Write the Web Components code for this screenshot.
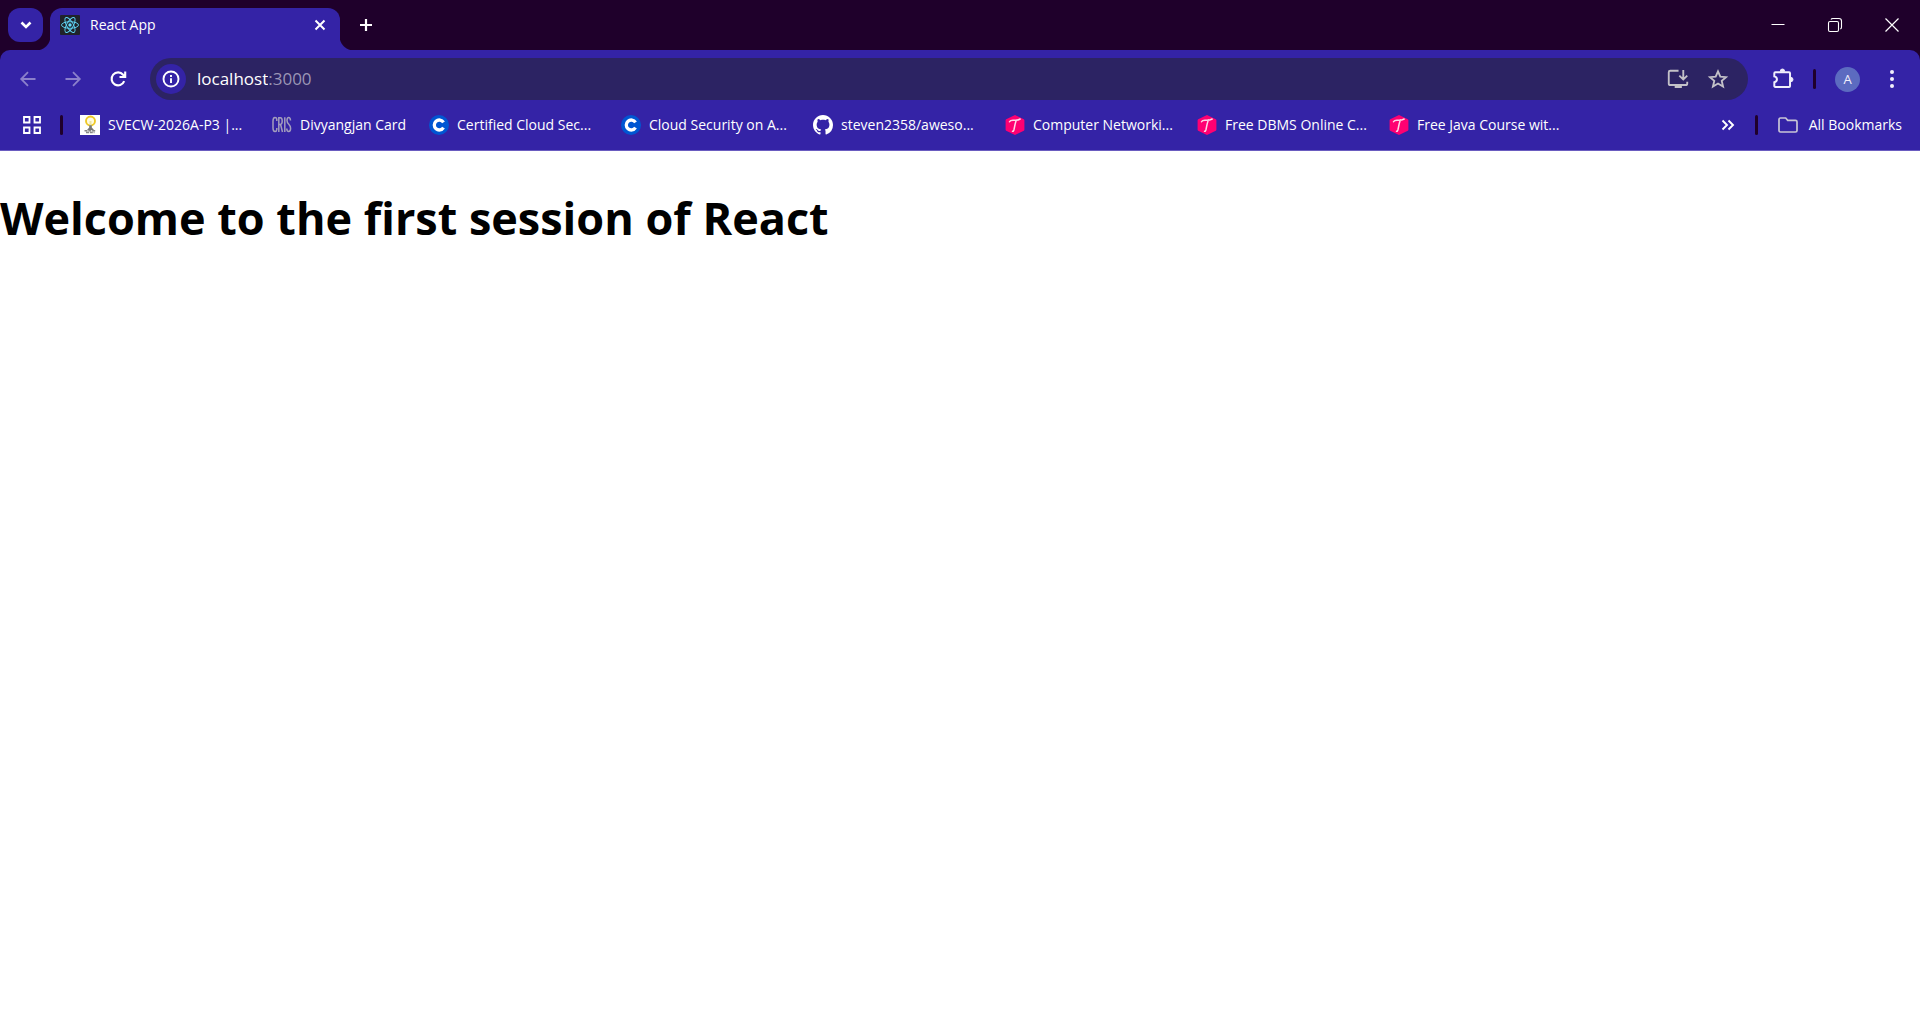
<!DOCTYPE html>
<html lang="en">
<head>
<meta charset="utf-8">
<title>React App</title>
<style>
:root{--frame:#1f002b;--bar:#3423a6;--field:#2c2363;font-family:"Open Sans","Noto Sans",sans-serif}
body{margin:0;background:#fff;color:#000}
</style>
</head>
<body>
<browser-window>
  <tab-strip slot="chrome"><browser-tab>React App</browser-tab></tab-strip>
  <nav-bar slot="chrome" host="localhost" port=":3000"></nav-bar>
  <bookmarks-bar slot="chrome">
    <book-mark icon="bulb">SVECW-2026A-P3 |...</book-mark>
    <book-mark icon="cris" short>Divyangjan Card</book-mark>
    <book-mark icon="coursera">Certified Cloud Sec...</book-mark>
    <book-mark icon="coursera">Cloud Security on A...</book-mark>
    <book-mark icon="github">steven2358/aweso...</book-mark>
    <book-mark icon="hex">Computer Networki...</book-mark>
    <book-mark icon="hex">Free DBMS Online C...</book-mark>
    <book-mark icon="hex">Free Java Course wit...</book-mark>
  </bookmarks-bar>
  <welcome-page>Welcome to the first session of React</welcome-page>
</browser-window>
<script>
const ICONS = {
  down: '<path d="m5.500 7.500 4.500 4.500 4.500-4.500" stroke-width="2.600"/>',
  close: '<path d="m5.500 5.500 9 9m0-9-9 9" stroke-width="2"/>',
  plus: '<path d="M10 4v12M4 10h12" stroke-width="2.200"/>',
  back: '<path d="M17.500 10H3.500M10 3.200 3.200 10l6.800 6.800" stroke-width="1.800"/>',
  forward: '<path d="M2.500 10h14M10 3.200l6.800 6.800-6.800 6.800" stroke-width="1.800"/>',
  reload: '<path d="M16.200 12.200A6.500 6.500 0 1 1 15.100 5.700L17 7.800M17.200 2.600V8H11.500" stroke-width="2.100"/>',
  info: '<circle cx="10" cy="10" r="7.500" stroke-width="1.900"/><path d="M10 9.300V14M10 6v2" stroke-width="1.900"/>',
  install: '<path d="M10.500 2.500H3Q1.600 2.500 1.600 3.900V14q0 1.500 1.500 1.500h13.800q1.500 0 1.500-1.500v-1.500M14.800 1.800v8.500M11.200 6.900l3.600 3.600 3.600-3.600" stroke-width="1.700"/><path d="M7 15h6.500v3.200H7z" fill="currentColor" stroke="none"/>',
  star: '<path d="m10 3 2.100 4.800 5.200.5-3.900 3.400 1.200 5.100L10 14.100l-4.600 2.700 1.200-5.100L2.700 8.300l5.200-.5z" stroke-width="1.700"/>',
  puzzle: '<path d="M3 3.800H15.500Q16.400 3.800 16.400 4.700V16.300q0 .9-.9.900H3q-.9 0-.9-.9V13q2.400-.5 2.400-2.700T2.100 7.600V4.700Q2.100 3.800 3 3.800z" stroke-width="1.800"/><path d="M7.500 3a2 2.100 0 0 1 4 0zM17 8.500a2.100 2 0 0 1 0 4z" fill="currentColor" stroke-width=".8"/>',
  dots: '<g fill="currentColor" stroke="none"><circle cx="10" cy="3" r="2"/><circle cx="10" cy="10" r="2"/><circle cx="10" cy="17" r="2"/></g>',
  minimize: '<path d="M3.500 9.500h13" stroke-width="1"/>',
  restore: '<rect x="3.500" y="6.500" width="10" height="10" rx="1.500" stroke-width="1.100"/><path d="M6 4.500Q6.400 3.500 8 3.500h6q2.500 0 2.500 2.500v6q0 1.600-1.200 2" stroke-width="1.100"/>',
  exit: '<path d="m3.500 3.500 13 13m0-13-13 13" stroke-width="1.200"/>',
  grid: '<path d="M2 2h5.500v5.500H2zM12.500 2H18v5.500h-5.500zM2 12.500h5.500V18H2zM12.500 12.500H18V18h-5.500z" stroke-width="1.800"/>',
  more: '<path d="m4.500 5.500 4.500 4.500-4.500 4.500M10.500 5.500 15 10l-4.500 4.500" stroke-width="1.900"/>',
  folder: '<path d="M1 4.500Q1 3 2.500 3h5.200l2 2.300h7.800q1.500 0 1.500 1.500v8.700q0 1.500-1.500 1.500h-15Q1 17 1 15.500z" stroke-width="1.700"/>',
  react: '<rect width="20" height="20" rx="1" fill="#20232a" stroke="none"/><g stroke="#61dafb" stroke-width=".9"><ellipse cx="10" cy="10" rx="8.500" ry="3.300"/><ellipse cx="10" cy="10" rx="8.500" ry="3.300" transform="rotate(60 10 10)"/><ellipse cx="10" cy="10" rx="8.500" ry="3.300" transform="rotate(120 10 10)"/></g><circle cx="10" cy="10" r="1.700" fill="#61dafb" stroke="none"/>',
  bulb: '<path fill="#fff" stroke="none" d="M0 0h20v20H0z"/><circle cx="10.500" cy="6" r="4.500" fill="#fffbe0" stroke="#efc928" stroke-width="1.900"/><path d="M10.500 6v5" stroke="#ece4a2" stroke-width="2"/><path d="M9.200 10.200h2.600v2.300l2.200 2.500H7l2.200-2.500z" fill="#777" stroke="none"/><path d="M4.500 15.700h11.500M6 17.500h8.500" stroke="#888" stroke-width="1.600" stroke-dasharray="3 .8"/>',
  cris: '<g stroke="#a39dbd" stroke-width="1.500"><path d="M4.800 6V4.200Q4.500 2.500 3 2.500 1 2.500 1 6v7q0 3.500 2 3.500 1.600 0 1.800-2V13M6.800 17V2.700h1.600q1.800 0 1.800 3.300T8.400 9.500H7M8.600 9.500l1.900 7.500M12.800 2.200V17M18.500 5.500q-.2-3-1.800-3t-1.700 3q0 2 1.800 3.800t1.800 4q0 3.200-1.900 3.200t-1.900-3"/></g>',
  coursera: '<circle cx="10" cy="10" r="10" fill="#0056d2" stroke="none"/><path d="M14.500 7.300A5 5 0 1 0 14.500 12.700" stroke="#fff" stroke-width="3.300"/>',
  github: '<path fill="#fff" stroke="none" transform="scale(1.25)" d="M8 0C3.580 0 0 3.580 0 8c0 3.540 2.290 6.530 5.470 7.590.4.070.55-.17.55-.38v-1.490c-2.010.37-2.530-.49-2.690-.94-.09-.23-.48-.94-.82-1.130-.28-.15-.68-.52-.01-.53.63-.01 1.080.58 1.230.82.72 1.210 1.870.87 2.330.66.070-.52.28-.87.51-1.070-1.780-.2-3.640-.89-3.640-3.950 0-.87.31-1.590.82-2.150-.08-.2-.36-1.020.08-2.120 0 0 .67-.21 2.200.82.64-.18 1.320-.27 2-.27s1.360.09 2 .27c1.530-1.040 2.200-.82 2.200-.82.44 1.100.16 1.920.08 2.120.51.56.82 1.270.82 2.150 0 3.070-1.870 3.750-3.650 3.950.29.25.54.73.54 1.480v2.200c0 .21.15.46.55.38A8 8 0 0 0 16 8c0-4.420-3.580-8-8-8z"/>',
  hex: '<path d="m10 1.200 8.300 4v9.600l-8.300 4-8.300-4V5.200z" fill="#ff0072" stroke="#ff0072" stroke-width="2.200" stroke-linejoin="round"/><path d="M4.500 6.800q.7-1.500 3.500-1.600 4.200.5 7.200-1.200M11.300 5q-1.300 3.800-2.300 9.500-.5 2-1.500 1.700" stroke="#ffd5e8" stroke-width="1.500" stroke-linecap="round"/>'
};

const define = (name, css, html) => customElements.define(name, class extends HTMLElement {
  constructor() {
    super();
    this.attachShadow({mode: 'open'});
  }
  connectedCallback() {
    const markup = typeof html === 'function' ? html(this) : html;
    this.shadowRoot.innerHTML = `<style>:host,*{box-sizing:border-box}button{font:inherit;color:inherit;background:none;border:0;padding:0;margin:0;display:flex;align-items:center;justify-content:center;flex:none}${css}</style>${markup}`;
  }
});

define('ui-icon', ':host{display:block;flex:none;width:20px;height:20px}svg{display:block;width:100%;height:100%}',
  el => `<svg viewBox="0 0 20 20" fill="none" stroke="currentColor" aria-hidden="true">${ICONS[el.getAttribute('name')]}</svg>`);

define('bar-divider', ':host{display:block;flex:none;width:3px;height:20px;border-radius:2px;background:var(--frame)}', '');

define('browser-window', ':host{display:flex;flex-direction:column;min-height:100vh}header{background:var(--frame);color:#fff}',
  '<header><slot name="chrome"></slot></header><slot></slot>');

define('tab-strip', `
  :host{display:flex;height:50px;align-items:flex-start;padding:8px 0 0 8px}
  .search{width:35px;height:34px;border-radius:12px;background:var(--bar);margin-right:7px}
  .new{width:34px;height:34px;margin-left:9px}
  .controls{display:flex;margin-left:auto;align-self:stretch;margin-top:-8px}
  .controls button{width:57px;height:49px}`,
  `<button class="search" aria-label="Search tabs"><ui-icon name="down"></ui-icon></button>
   <slot></slot>
   <button class="new" aria-label="New tab"><ui-icon name="plus"></ui-icon></button>
   <div class="controls">
     <button aria-label="Minimize"><ui-icon name="minimize"></ui-icon></button>
     <button aria-label="Restore"><ui-icon name="restore"></ui-icon></button>
     <button aria-label="Close window"><ui-icon name="exit"></ui-icon></button>
   </div>`);

define('browser-tab', `
  :host{display:flex;position:relative;align-items:center;flex:0 1 290px;height:42px;padding:0 10px 8px;gap:10px;background:var(--bar);border-radius:12px 12px 0 0;font-size:14px;line-height:20px}
  :host::before,:host::after{content:"";position:absolute;bottom:0;width:14px;height:14px}
  :host::before{right:100%;background:radial-gradient(circle at 0 0,transparent 14px,var(--bar) 15px)}
  :host::after{left:100%;background:radial-gradient(circle at 100% 0,transparent 14px,var(--bar) 15px)}
  span{flex:1}`,
  `<ui-icon name="react"></ui-icon><span><slot></slot></span>
   <button aria-label="Close tab"><ui-icon name="close"></ui-icon></button>`);

define('nav-bar', `
  :host{display:flex;align-items:center;height:58px;padding:0 10px;background:var(--bar);border-radius:10px 10px 0 0}
  button{width:36px;height:36px}
  .history{display:flex;gap:9px;margin-right:14px}
  .off{color:#8b80cb}
  .address{display:flex;flex:1;align-items:center;height:42px;padding:0 12px 0 6px;border-radius:21px;background:var(--field);font-size:17px;line-height:24px;color:#9b96b5}
  .info{width:30px;height:30px;border-radius:50%;background:var(--bar);color:#fff;margin-right:11px}
  input{field-sizing:content;font:inherit;color:#fff;background:none;border:0;outline:0;padding:0;margin:0}
  .actions{display:flex;gap:4px;margin-left:auto;color:#c3c1c8}
  .tools{display:flex;align-items:center;margin-left:17px;color:#f1effc}
  .tools bar-divider{margin:0 19px 0 12px}
  .avatar{width:25px;height:25px;border-radius:50%;background:#5c6bc0;font-size:13px;line-height:20px;margin-right:14px}
  .wide{width:22px;height:22px}`,
  el => `<div class="history">
    <button class="off" aria-label="Back" disabled><ui-icon name="back"></ui-icon></button>
    <button class="off" aria-label="Forward" disabled><ui-icon name="forward"></ui-icon></button>
    <button aria-label="Reload"><ui-icon name="reload"></ui-icon></button></div>
    <div class="address"><button class="info" aria-label="View site information"><ui-icon name="info"></ui-icon></button>
      <input type="text" aria-label="Address" value="${el.getAttribute('host')}"><span>${el.getAttribute('port')}</span>
      <div class="actions"><button aria-label="Install app"><ui-icon class="wide" name="install"></ui-icon></button>
      <button aria-label="Bookmark this tab"><ui-icon class="wide" name="star"></ui-icon></button></div></div>
    <div class="tools"><button aria-label="Extensions"><ui-icon class="wide" name="puzzle"></ui-icon></button><bar-divider></bar-divider>
      <button class="avatar" aria-label="Profile">A</button>
      <button aria-label="Menu"><ui-icon name="dots"></ui-icon></button></div>`);

define('bookmarks-bar', `
  :host{display:flex;align-items:center;height:43px;padding:0 18px 8px 22px;background:var(--bar);border-bottom:1px solid #6a5cc0;font-size:14px;line-height:20px}
  bar-divider{margin:0 17px 0 18px}
  nav{display:flex;flex:1;min-width:0;overflow:hidden}
  .all{gap:11px}.all ui-icon{color:#c8c5d6}
  bar-divider.end{margin:0 20px 0 17px}`,
  `<button aria-label="Apps"><ui-icon name="grid"></ui-icon></button><bar-divider></bar-divider>
   <nav aria-label="Bookmarks"><slot></slot></nav>
   <button aria-label="More bookmarks"><ui-icon name="more"></ui-icon></button><bar-divider class="end"></bar-divider>
   <button class="all"><ui-icon name="folder"></ui-icon>All Bookmarks</button>`);

define('book-mark', `
  :host{display:block;flex:0 0 auto;width:192px}
  :host([short]){width:157px}
  a{display:flex;align-items:center;gap:8px;color:inherit;text-decoration:none;white-space:nowrap}`,
  el => `<a href="#"><ui-icon name="${el.getAttribute('icon')}"></ui-icon><span><slot></slot></span></a>`);

define('welcome-page', ':host{display:block;flex:1}h1{margin:34px 0;font-size:45px;line-height:66px;font-weight:700}',
  '<main><h1><slot></slot></h1></main>');
</script>
</body>
</html>
